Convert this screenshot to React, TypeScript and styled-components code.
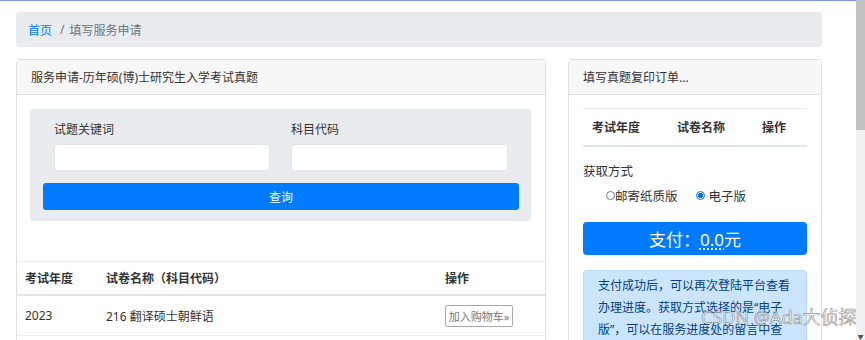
import React from 'react';
import styled, { createGlobalStyle } from 'styled-components';

const GlobalStyle = createGlobalStyle`
  html, body {
    margin: 0;
    padding: 0;
    background: #fff;
    overflow: hidden;
  }
  body {
    font-family: "Noto Sans", "Noto Sans CJK SC", sans-serif;
    font-size: 12px;
    color: #333;
  }
  * { box-sizing: border-box; }
`;

const Frame = styled.div`
  height: 340px;
  display: flex;
  position: relative;
  overflow: hidden;
`;

const ScrollTrack = styled.div`
  width: 9px;
  flex-shrink: 0;
  background: #f1f1f1;
  display: flex;
  flex-direction: column;
  justify-content: space-between;
`;

const ScrollThumb = styled.div`
  height: 130px;
  background: #c1c1c1;
`;

const ScrollArrow = styled.div`
  height: 8px;
  display: flex;
  align-items: center;
  justify-content: center;
  font-size: 6px;
  color: #505050;
`;

const Page = styled.div`
  flex: 1;
  border-top: 1px solid #7b93e8;
  padding: 11px 34px 0 16px;
  overflow: hidden;
`;

const Breadcrumb = styled.nav`
  height: 35px;
  background: #e9ecef;
  border-radius: 4px;
  padding: 0 12px;
  display: flex;
  align-items: center;
  font-size: 12px;
  color: #6c757d;
`;

const Crumb = styled.span<{ $link?: boolean }>`
  color: ${(p) => (p.$link ? '#007bff' : '#6c757d')};
`;

const Sep = styled.span`
  padding: 0 5px 0 8px;
  color: #6c757d;
`;

const Columns = styled.div`
  display: flex;
  gap: 22px;
  margin-top: 12px;
  align-items: flex-start;
`;

const Card = styled.section<{ $width: number }>`
  width: ${(p) => p.$width}px;
  border: 1px solid #dfdfdf;
  border-radius: 4px;
  background: #fff;
  min-height: 600px;
`;

const CardHeader = styled.header`
  height: 35px;
  background: #f7f7f7;
  border-bottom: 1px solid #dfdfdf;
  padding: 0 14px;
  display: flex;
  align-items: center;
  font-size: 12px;
  color: #333;
`;

const SearchWrap = styled.div`
  padding: 14px 14px 0 13px;
`;

const SearchBox = styled.div`
  background: #e9ecef;
  border-radius: 4px;
  padding: 12px 12px 11px 13px;
`;

const FieldRow = styled.div`
  display: grid;
  grid-template-columns: 216px 217px;
  column-gap: 21px;
  padding: 0 11px;
`;

const Field = styled.label`
  display: flex;
  flex-direction: column;
`;

const FieldLabel = styled.span`
  line-height: 18px;
  font-size: 12px;
  color: #333;
  margin-bottom: 5px;
`;

const Input = styled.input`
  height: 27px;
  border: 1px solid #e2e5e8;
  border-radius: 3px;
  background: #fff;
  outline: none;
`;

const SearchButton = styled.button`
  margin-top: 12px;
  width: 100%;
  height: 27px;
  border: none;
  border-radius: 3px;
  background: #007bff;
  color: #fff;
  font-family: inherit;
  font-size: 12px;
`;

const ResultTable = styled.div`
  margin-top: 40px;
  border-top: 1px solid #eceef0;
`;

const ResultRow = styled.div<{ $head?: boolean }>`
  display: grid;
  grid-template-columns: 81px 339px 1fr;
  align-items: center;
  height: ${(p) => (p.$head ? 34 : 40)}px;
  padding-left: 8px;
  border-bottom: ${(p) => (p.$head ? '2px solid #e3e6e9' : '1px solid #eceef0')};
  font-weight: ${(p) => (p.$head ? 700 : 400)};
  color: #333;
`;

const CartButton = styled.button`
  justify-self: start;
  height: 22px;
  width: 68px;
  padding: 0;
  border: 1px solid #a9a9a9;
  border-radius: 2px;
  background: #fff;
  color: #777;
  font-family: inherit;
  font-size: 11px;
`;

const OrderBody = styled.div`
  padding: 13px 14px 0;
`;

const OrderTable = styled.div`
  border-top: 1px solid #eceef0;
`;

const OrderHead = styled.div`
  display: grid;
  grid-template-columns: 85px 85px 1fr;
  align-items: center;
  height: 38px;
  padding-left: 9px;
  border-bottom: 2px solid #e3e6e9;
  font-weight: 700;
`;

const MethodLabel = styled.div`
  margin-top: 16px;
  line-height: 18px;
  font-size: 12.5px;
`;

const RadioRow = styled.div`
  display: flex;
  align-items: center;
  gap: 18px;
  margin-top: 5px;
  padding-left: 23px;
  height: 18px;
  font-size: 12.5px;
`;

const RadioOption = styled.label<{ $gap: number }>`
  display: flex;
  align-items: center;
  gap: ${(p) => p.$gap}px;
`;

const RadioDot = styled.span<{ $checked?: boolean }>`
  width: 9px;
  height: 9px;
  border-radius: 50%;
  border: 1px solid ${(p) => (p.$checked ? '#0a72e6' : '#777')};
  background: ${(p) => (p.$checked ? 'radial-gradient(circle, #0a72e6 0 2.4px, #fff 2.6px)' : '#fff')};
`;

const PayButton = styled.button`
  margin-top: 18px;
  width: 100%;
  height: 33px;
  border: none;
  border-radius: 4px;
  background: #007bff;
  color: #fff;
  font-family: inherit;
  font-size: 17px;
`;

const Amount = styled.abbr`
  text-decoration: underline dotted;
  text-underline-offset: 3px;
`;

const Alert = styled.div`
  margin-top: 15px;
  background: #cce5ff;
  border: 1px solid #b8daff;
  border-radius: 4px;
  padding: 4px 14px 10px;
  color: #004085;
  font-size: 12px;
  line-height: 22px;
`;

const Watermark = styled.div`
  position: absolute;
  left: 701px;
  top: 306px;
  font-size: 18px;
  line-height: 22px;
  color: rgba(255, 255, 255, 0.75);
  -webkit-text-stroke: 0.7px rgba(70, 70, 70, 0.55);
  pointer-events: none;
  white-space: nowrap;
`;

export default function App() {
  return (
    <>
      <GlobalStyle />
      <Frame>
        <Page>
          <Breadcrumb>
            <Crumb $link>首页</Crumb>
            <Sep>/</Sep>
            <Crumb>填写服务申请</Crumb>
          </Breadcrumb>
          <Columns>
            <Card $width={530}>
              <CardHeader>服务申请-历年硕(博)士研究生入学考试真题</CardHeader>
              <SearchWrap>
                <SearchBox>
                  <FieldRow>
                    <Field>
                      <FieldLabel>试题关键词</FieldLabel>
                      <Input />
                    </Field>
                    <Field>
                      <FieldLabel>科目代码</FieldLabel>
                      <Input />
                    </Field>
                  </FieldRow>
                  <SearchButton>查询</SearchButton>
                </SearchBox>
              </SearchWrap>
              <ResultTable>
                <ResultRow $head>
                  <span>考试年度</span>
                  <span>试卷名称（科目代码）</span>
                  <span>操作</span>
                </ResultRow>
                <ResultRow>
                  <span>2023</span>
                  <span>216 翻译硕士朝鲜语</span>
                  <CartButton>加入购物车»</CartButton>
                </ResultRow>
              </ResultTable>
            </Card>
            <Card $width={254}>
              <CardHeader>填写真题复印订单...</CardHeader>
              <OrderBody>
                <OrderTable>
                  <OrderHead>
                    <span>考试年度</span>
                    <span>试卷名称</span>
                    <span>操作</span>
                  </OrderHead>
                </OrderTable>
                <MethodLabel>获取方式</MethodLabel>
                <RadioRow>
                  <RadioOption $gap={0}>
                    <RadioDot />
                    邮寄纸质版
                  </RadioOption>
                  <RadioOption $gap={4}>
                    <RadioDot $checked />
                    电子版
                  </RadioOption>
                </RadioRow>
                <PayButton>
                  支付：<Amount title="金额">0.0</Amount>元
                </PayButton>
                <Alert>
                  支付成功后，可以再次登陆平台查看办理进度。获取方式选择的是“电子版”，可以在服务进度处的留言中查看下载链接地址
                </Alert>
              </OrderBody>
            </Card>
          </Columns>
        </Page>
        <ScrollTrack>
          <ScrollThumb />
          <ScrollArrow>▼</ScrollArrow>
        </ScrollTrack>
        <Watermark>CSDN @Ada大侦探</Watermark>
      </Frame>
    </>
  );
}
